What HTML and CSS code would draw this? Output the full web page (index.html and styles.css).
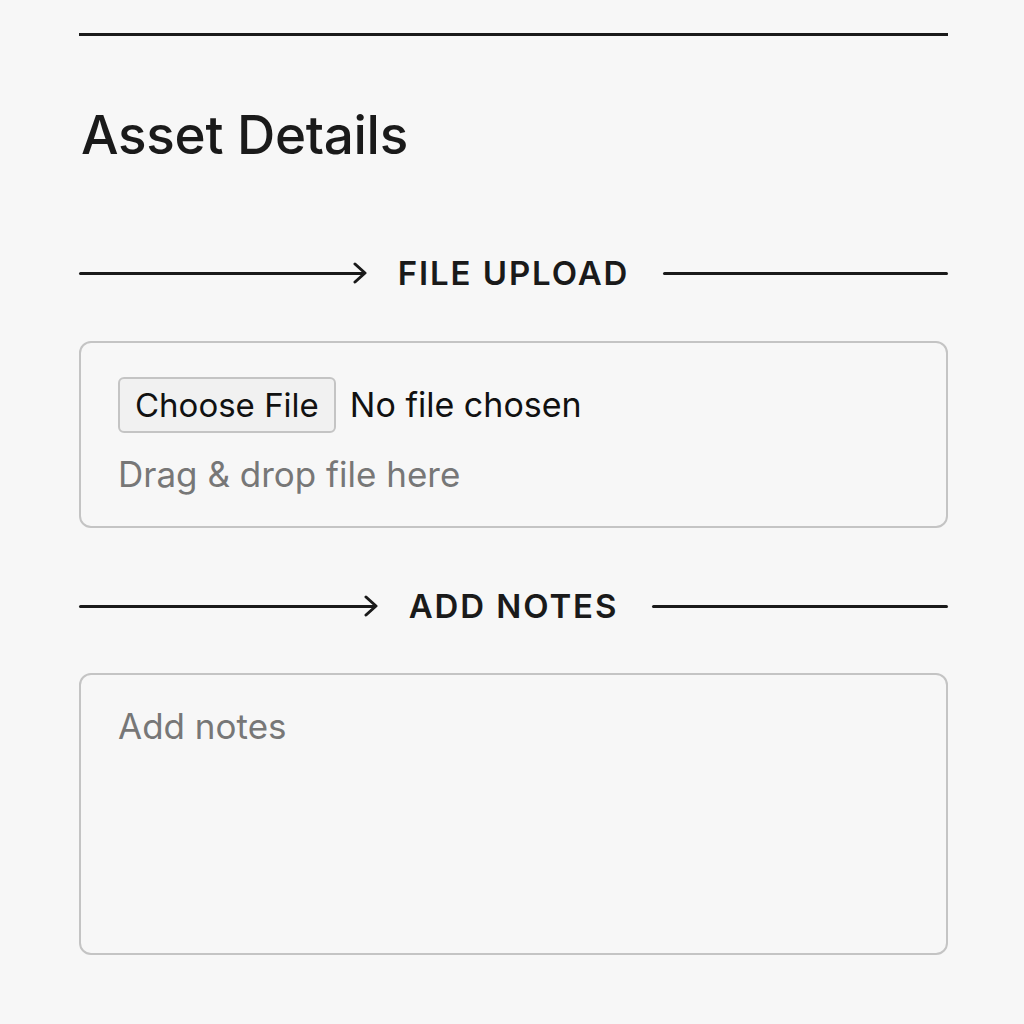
FILE: index.html
```html
<!DOCTYPE html>
<html lang="en">
<head>
  <meta charset="UTF-8" />
  <title>Asset Details</title>
  <link rel="stylesheet" href="styles.css">
</head>
<body>
  <div class="page">
    <hr class="top-rule">
    <h1 class="title">Asset Details</h1>

    <div class="section-head head-upload">
      <div class="line arrow">
        <svg width="14" height="22" viewBox="0 0 14 22"><path d="M2 2 L12 11 L2 20" fill="none" stroke="#1a1a1a" stroke-width="3" stroke-linecap="round" stroke-linejoin="round"/></svg>
      </div>
      <span class="label">FILE UPLOAD</span>
      <div class="line"></div>
    </div>

    <div class="box upload">
      <input type="file" class="file">
      <div class="hint">Drag &amp; drop file here</div>
    </div>

    <div class="section-head head-notes">
      <div class="line arrow">
        <svg width="14" height="22" viewBox="0 0 14 22"><path d="M2 2 L12 11 L2 20" fill="none" stroke="#1a1a1a" stroke-width="3" stroke-linecap="round" stroke-linejoin="round"/></svg>
      </div>
      <span class="label">ADD NOTES</span>
      <div class="line"></div>
    </div>

    <textarea class="box notes" placeholder="Add notes"></textarea>
  </div>
</body>
</html>
```
FILE: styles.css
```css
* {
  box-sizing: border-box;
}

body {
  margin: 0;
  background: #f7f7f7;
  font-family: Inter, 'Liberation Sans', sans-serif;
  color: #1a1a1a;
}

.page {
  width: 869px;
  margin-left: 79px;
  padding-top: 33px;
}

.top-rule {
  border: none;
  height: 3px;
  background: #1a1a1a;
  margin: 0;
}

.title {
  font-size: 53px;
  font-weight: 500;
  line-height: 65px;
  margin: 67px 0 0 2px;
  letter-spacing: -0.3px;
}

.section-head {
  display: flex;
  align-items: center;
  height: 40px;
}

.head-upload {
  margin-top: 85px;
}

.head-notes {
  margin-top: 58px;
}

.section-head .line {
  flex: 1;
  height: 3px;
  background: #1a1a1a;
  border-radius: 2px;
}

.section-head .arrow {
  position: relative;
}

.section-head .arrow svg {
  position: absolute;
  right: -3px;
  top: -9.5px;
}

.section-head .label {
  font-size: 33px;
  font-weight: 600;
  letter-spacing: 1.9px;
  padding: 0 34px;
}

.box {
  display: block;
  width: 100%;
  border: 2px solid #c4c4c4;
  border-radius: 12px;
  background: #f7f7f7;
}

.upload {
  margin-top: 48px;
  height: 187px;
  padding: 34px 37px 0;
}

.file {
  font-family: Inter, 'Liberation Sans', sans-serif;
  font-size: 34px;
  color: #111;
}

.file::file-selector-button {
  font-family: Inter, 'Liberation Sans', sans-serif;
  font-size: 33px;
  height: 56px;
  padding: 0 15px;
  margin-right: 14px;
  border: 2px solid #c4c4c4;
  border-radius: 6px;
  background: #f1f1f1;
  color: #111;
}

.hint {
  margin-top: 20px;
  font-size: 35px;
  color: #777;
}

.notes {
  margin-top: 47px;
  height: 282px;
  padding: 30px 37px;
  resize: none;
  font-family: Inter, 'Liberation Sans', sans-serif;
  font-size: 35px;
  outline: none;
}

.notes::placeholder {
  color: #777;
}
```
